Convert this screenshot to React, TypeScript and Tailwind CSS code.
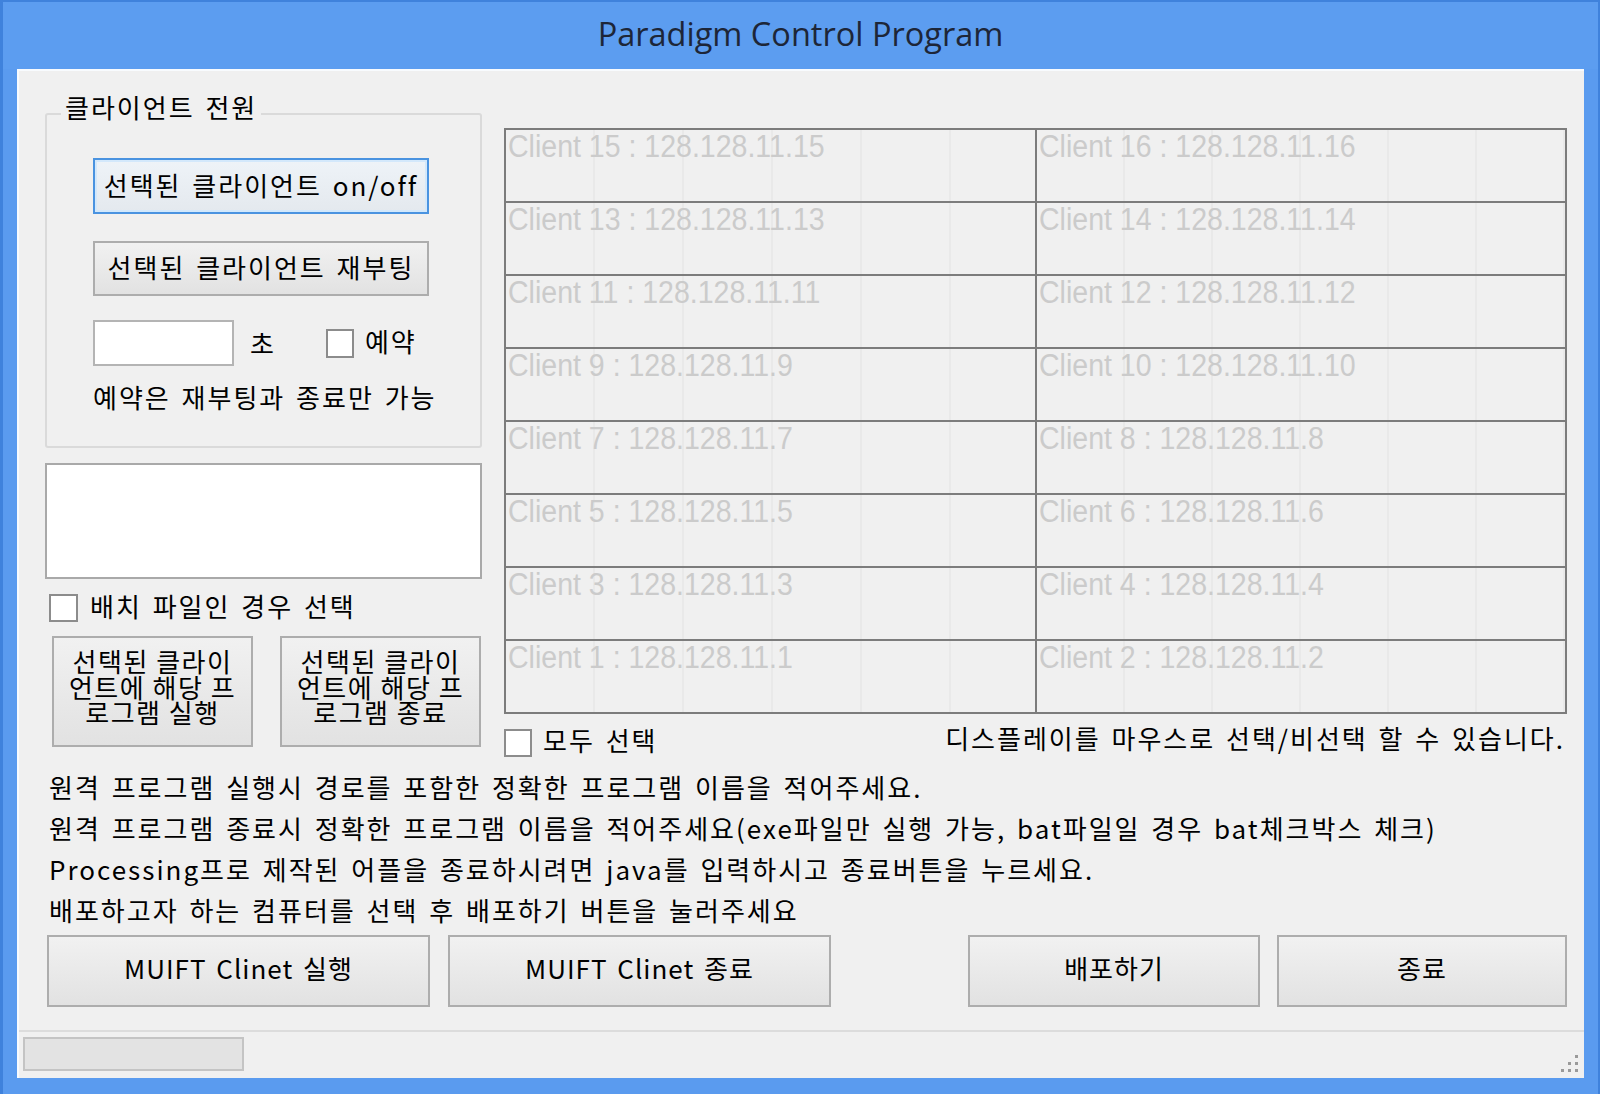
import React from "react";

const leftNums = [15, 13, 11, 9, 7, 5, 3, 1];
const rightNums = [16, 14, 12, 10, 8, 6, 4, 2];

function WinButton({
  className = "",
  focused = false,
  children,
}: {
  className?: string;
  focused?: boolean;
  children: React.ReactNode;
}) {
  return (
    <div
      className={
        (focused
          ? "border-2 border-[#4a93e0] bg-linear-to-b from-[#eef3f8] to-[#e4e9ee] shadow-[inset_0_0_0_2px_#d3e8fb] "
          : "border-2 border-[#adadad] bg-linear-to-b from-[#f1f1f1] to-[#e2e2e2] ") +
        "flex items-center justify-center text-black " +
        className
      }
    >
      {children}
    </div>
  );
}

function CheckBox({ className = "" }: { className?: string }) {
  return <div className={"border-2 border-[#8c8c8c] bg-white shrink-0 " + className} />;
}

function Cell({ n, shift }: { n: number; shift: boolean }) {
  return (
    <div
      className={
        "h-[73px] border-r-2 border-b-2 border-[#7c7c7c] pl-[2px] pt-[1px] overflow-hidden " +
        (shift
          ? "bg-[repeating-linear-gradient(90deg,transparent_0px,transparent_86px,#e9e9e9_86px,#e9e9e9_88px)]"
          : "bg-[repeating-linear-gradient(90deg,transparent_0px,transparent_87px,#e9e9e9_87px,#e9e9e9_89px)]")
      }
    >
      <div className="origin-left scale-x-[0.92] whitespace-nowrap font-['Liberation_Sans',Arial,sans-serif] text-[31px] leading-none tracking-[0px] [word-spacing:0px] text-[#cbcbcb]">
        Client {n} : 128.128.11.{n}
      </div>
    </div>
  );
}

export default function App() {
  return (
    <div className="w-[1600px] h-[1094px] bg-[#5a9bef] flex flex-col font-['Noto_Sans_CJK_KR','Noto_Sans',sans-serif] text-[26px] leading-none tracking-[2px] [word-spacing:3px] text-black overflow-hidden border-t-2 border-l-[3px] border-r-[2px] border-[#3f82dc]">
      {/* Title bar */}
      <div className="h-[67px] shrink-0 flex items-center justify-center bg-[#5c9df0]">
        <span className="font-['Open_Sans',sans-serif] text-[32.5px] tracking-[0px] [word-spacing:0px] text-[#1d2638] leading-none -mt-[2px]">
          Paradigm Control Program
        </span>
      </div>

      {/* Client area */}
      <div className="mx-[14px] h-[1009px] bg-[#f0f0f0] border-t-2 border-l-2 border-[#f8fbfe] flex flex-col">
        {/* Top section */}
        <div className="h-[684px] flex items-start pl-[26px]">
          {/* Left column */}
          <div className="w-[437px] flex flex-col">
            {/* Group box */}
            <div className="relative mt-[42px] h-[335px] border-2 border-[#dadada] rounded-[3px] flex flex-col pl-[46px]">
              <span className="absolute -top-[22px] left-[14px] bg-[#f0f0f0] px-[4px] leading-[28px]">
                클라이언트 전원
              </span>
              <WinButton focused className="mt-[43px] w-[336px] h-[56px]">
                <span className="-mt-[3px]">선택된 클라이언트 on/off</span>
              </WinButton>
              <WinButton className="mt-[27px] w-[336px] h-[55px]">
                <span className="-mt-[3px]">선택된 클라이언트 재부팅</span>
              </WinButton>
              <div className="mt-[24px] flex items-center">
                <div className="w-[141px] h-[46px] bg-white border-2 border-[#b4b4b4]" />
                <span className="ml-[16px]">초</span>
                <CheckBox className="ml-[50px] w-[28px] h-[29px]" />
                <span className="ml-[11px] -mt-[5px]">예약</span>
              </div>
              <div className="mt-[18px]">예약은 재부팅과 종료만 가능</div>
            </div>

            {/* Multi textbox */}
            <div className="mt-[15px] h-[116px] bg-white border-2 border-[#a9a9a9]" />

            {/* Batch checkbox */}
            <div className="mt-[15px] flex items-center pl-[4px]">
              <CheckBox className="w-[29px] h-[28px]" />
              <span className="ml-[12px] -mt-[4px]">배치 파일인 경우 선택</span>
            </div>

            {/* Run / stop buttons */}
            <div className="mt-[14px] flex pl-[7px]">
              <WinButton className="w-[201px] h-[111px] text-center leading-[25.5px] tracking-[1.5px] [word-spacing:0px] pb-[10px]">
                <div className="flex flex-col">
                  <span>선택된 클라이</span>
                  <span>언트에 해당 프</span>
                  <span>로그램 실행</span>
                </div>
              </WinButton>
              <WinButton className="ml-[27px] w-[201px] h-[111px] text-center leading-[25.5px] tracking-[1.5px] [word-spacing:0px] pb-[10px]">
                <div className="flex flex-col">
                  <span>선택된 클라이</span>
                  <span>언트에 해당 프</span>
                  <span>로그램 종료</span>
                </div>
              </WinButton>
            </div>
          </div>

          {/* Right column */}
          <div className="ml-[22px] w-[1063px] flex flex-col">
            <div className="mt-[57px] grid grid-cols-2 border-t-2 border-l-2 border-[#7c7c7c]">
              {leftNums.map((l, i) => (
                <React.Fragment key={l}>
                  <Cell n={l} shift={false} />
                  <Cell n={rightNums[i]} shift={true} />
                </React.Fragment>
              ))}
            </div>
            <div className="mt-[15px] flex items-center justify-between pr-[2px]">
              <div className="flex items-center">
                <CheckBox className="w-[28px] h-[28px]" />
                <span className="ml-[11px] -mt-[7px]">모두 선택</span>
              </div>
              <span className="-mt-[10px]">디스플레이를 마우스로 선택/비선택 할 수 있습니다.</span>
            </div>
          </div>
        </div>

        {/* Info lines */}
        <div className="mt-[11px] pl-[30px] flex flex-col leading-[41px]">
          <div>원격 프로그램 실행시 경로를 포함한 정확한 프로그램 이름을 적어주세요.</div>
          <div>원격 프로그램 종료시 정확한 프로그램 이름을 적어주세요(exe파일만 실행 가능, bat파일일 경우 bat체크박스 체크)</div>
          <div>Processing프로 제작된 어플을 종료하시려면 java를 입력하시고 종료버튼을 누르세요.</div>
          <div>배포하고자 하는 컴퓨터를 선택 후 배포하기 버튼을 눌러주세요</div>
        </div>

        {/* Bottom buttons */}
        <div className="mt-[5px] flex pl-[28px] tracking-[1px]">
          <WinButton className="w-[383px] h-[72px]"><span className="-mt-[6px]">MUIFT Clinet 실행</span></WinButton>
          <WinButton className="ml-[18px] w-[383px] h-[72px]"><span className="-mt-[6px]">MUIFT Clinet 종료</span></WinButton>
          <WinButton className="ml-[137px] w-[292px] h-[72px]"><span className="-mt-[6px]">배포하기</span></WinButton>
          <WinButton className="ml-[17px] w-[290px] h-[72px]"><span className="-mt-[6px]">종료</span></WinButton>
        </div>

        {/* Status bar */}
        <div className="mt-auto h-[48px] border-t-2 border-[#dcdcdc] flex items-start justify-between">
          <div className="mt-[5px] ml-[4px] w-[221px] h-[34px] bg-[#e3e3e3] border-2 border-[#c4c4c4]" />
          <svg width="22" height="22" viewBox="0 0 22 22" className="self-end mb-[4px] mr-[4px]">
            <g fill="#9a9a9a">
              <rect x="17" y="3" width="3" height="3" />
              <rect x="17" y="10" width="3" height="3" />
              <rect x="10" y="10" width="3" height="3" />
              <rect x="17" y="17" width="3" height="3" />
              <rect x="10" y="17" width="3" height="3" />
              <rect x="3" y="17" width="3" height="3" />
            </g>
          </svg>
        </div>
      </div>
      <div className="flex-1" />
    </div>
  );
}
